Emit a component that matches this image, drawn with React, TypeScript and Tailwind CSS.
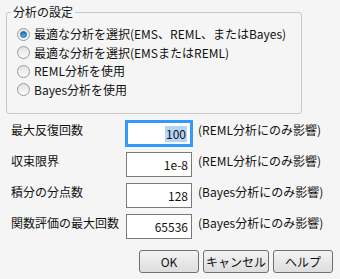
import React from 'react';

const font = "font-['Noto_Sans_CJK_JP','Noto_Sans',sans-serif]";

interface RadioRowProps {
    label: string;
    checked?: boolean;
}

// Windows-style radio button
const RadioRow: React.FC<RadioRowProps> = ({label, checked}) => (
    <div className="flex items-center h-[18.5px]">
        <span
            className="ml-[10px] w-[13px] h-[13px] rounded-full border border-[#9a9a9a] bg-gradient-to-b from-[#e2e2e2] to-[#fbfbfb] flex items-center justify-center shrink-0">
            {checked && (
                <span
                    className="w-[7px] h-[7px] rounded-full bg-gradient-to-b from-[#1f6fb8] to-[#56b4ef] border border-[#1a5f9e]"/>
            )}
        </span>
        <span className="ml-[4px] text-[12px] leading-[18px] text-[#111]">{label}</span>
    </div>
);

interface FieldRowProps {
    label: string;
    value: string;
    note: string;
    focused?: boolean;
}

const FieldRow: React.FC<FieldRowProps> = ({label, value, note, focused}) => (
    <div className="flex items-start h-[25px]">
        <span className="w-[115px] text-[12px] leading-[18px] text-[#111]">{label}</span>
        <div
            className={`w-[66px] h-[25px] bg-white flex items-center justify-end pr-[3px] ${
                focused
                    ? 'border-2 border-[#3399ff] shadow-[0_0_0_1px_#3399ff]'
                    : 'border border-[#7a7a7a]'
            }`}
        >
            <span
                className={`text-[12px] leading-[16px] text-[#111] ${focused ? 'bg-[#b4d5f5] px-[1px]' : ''}`}>
                {value}
            </span>
        </div>
        <span className="ml-[6px] text-[12px] leading-[18px] text-[#111]">{note}</span>
    </div>
);

const Button: React.FC<{ label: string; width: string }> = ({label, width}) => (
    <button
        className={`${width} h-[23px] rounded-[3px] border border-[#707070] bg-gradient-to-b from-[#f4f4f4] to-[#dddddd] text-[12px] leading-[16px] text-[#111] flex items-center justify-center`}
    >
        {label}
    </button>
);

export default function App() {
    return (
        <div className={`w-[340px] h-[279px] bg-[#f5f5f5] overflow-hidden ${font}`}>
            {/* Analysis settings group */}
            <fieldset className="mt-[3px] ml-[6px] w-[296px] border border-[#c8c8c8] rounded-[3px] pt-[4px] pb-[14px]">
                <legend className="ml-[4px] px-[2px] text-[12px] leading-[18px] text-[#111]">分析の設定</legend>
                <RadioRow label="最適な分析を選択(EMS、REML、またはBayes)" checked/>
                <RadioRow label="最適な分析を選択(EMSまたはREML)"/>
                <RadioRow label="REML分析を使用"/>
                <RadioRow label="Bayes分析を使用"/>
            </fieldset>

            {/* Numeric options */}
            <div className="mt-[7px] pl-[11px] flex flex-col gap-[6px]">
                <FieldRow label="最大反復回数" value="100" note="(REML分析にのみ影響)" focused/>
                <FieldRow label="収束限界" value="1e-8" note="(REML分析にのみ影響)"/>
                <FieldRow label="積分の分点数" value="128" note="(Bayes分析にのみ影響)"/>
                <FieldRow label="関数評価の最大回数" value="65536" note="(Bayes分析にのみ影響)"/>
            </div>

            {/* Buttons */}
            <div className="mt-[11px] pr-[7px] flex justify-end gap-[4px]">
                <Button label="OK" width="w-[60px]"/>
                <Button label="キャンセル" width="w-[66px]"/>
                <Button label="ヘルプ" width="w-[60px]"/>
            </div>
        </div>
    );
}
